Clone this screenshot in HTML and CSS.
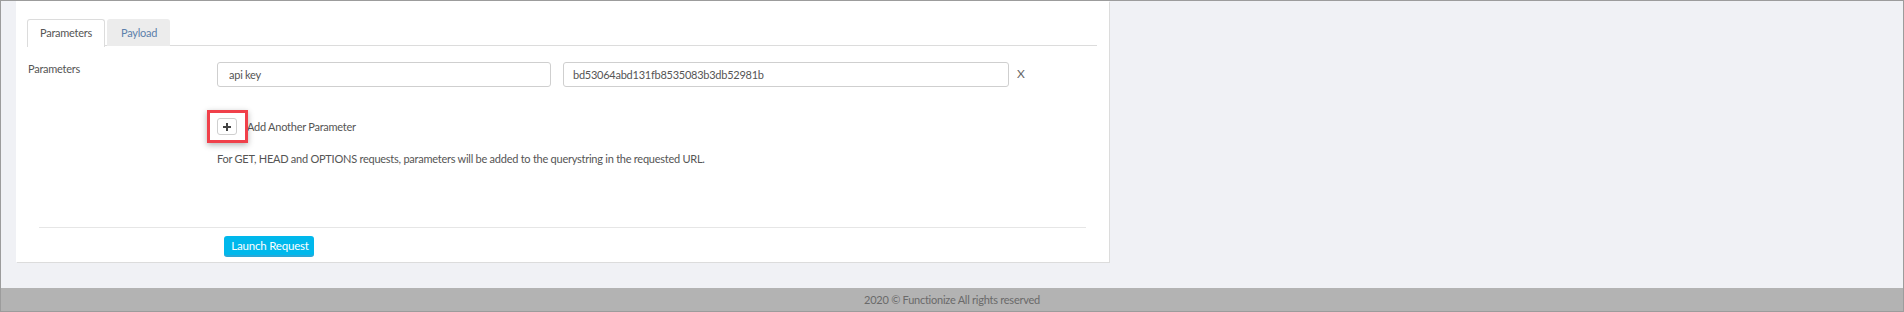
FILE: index.html
```html
<!DOCTYPE html>
<html>
<head>
<meta charset="utf-8">
<link rel="stylesheet" href="styles.css">
</head>
<body>
<div class="page">
  <main class="main">
    <section class="card">
      <ul class="tabs">
        <li class="tab active">Parameters</li>
        <li class="tab">Payload</li>
      </ul>
      <div class="form-row">
        <label class="label">Parameters</label>
        <div class="fields">
          <div class="param-row">
            <input class="input key" type="text" value="api key">
            <input class="input val" type="text" value="bd53064abd131fb8535083b3db52981b">
            <span class="remove">X</span>
          </div>
          <div class="add-row">
            <span class="add-wrap">
              <button class="add-btn" type="button" aria-label="Add">
                <svg width="8" height="8" viewBox="0 0 8 8"><path d="M3 0h2v3h3v2H5v3H3V5H0V3h3z" fill="#444"/></svg>
              </button>
              <span class="highlight"></span>
            </span>
            <span class="add-text">Add Another Parameter</span>
          </div>
          <p class="help">For GET, HEAD and OPTIONS requests, parameters will be added to the querystring in the requested URL.</p>
        </div>
      </div>
      <hr class="divider">
      <div class="actions">
        <button class="launch" type="button">Launch Request</button>
      </div>
    </section>
  </main>
  <footer class="footer">2020 © Functionize All rights reserved</footer>
</div>
</body>
</html>
```
FILE: styles.css
```css
* { box-sizing: border-box; }
html, body { margin: 0; padding: 0; }
body {
  font-family: Lato, "Open Sans", sans-serif;
  font-size: 11px;
  letter-spacing: -0.25px;
  color: #555;
  background: #f0f1f5;
}
.page {
  width: 1904px;
  height: 312px;
  border: 1px solid #9c9c9c;
  display: flex;
  flex-direction: column;
}
.main {
  flex: 1;
  padding-left: 15px;
}
.card {
  width: 1093px;
  height: 261px;
  background: #fff;
  box-shadow: 1px 1px 0 #dcdcdc;
  padding: 18px 12px 0 11px;
  display: flex;
  flex-direction: column;
}
.tabs {
  list-style: none;
  margin: 0;
  padding: 0;
  display: flex;
  gap: 2px;
  border-bottom: 1px solid #dcdcdc;
  height: 27px;
}
.tab {
  height: 27px;
  line-height: 26px;
  padding: 0 12px 0 13px;
  background: #ececec;
  color: #5b80ab;
  border-radius: 3px 3px 0 0;
  border: 1px solid #ececec;
  border-bottom: none;
}
.tab.active {
  background: #fff;
  color: #555;
  border-color: #dcdcdc;
  height: 28px;
  padding: 0 12px 0 12px;
}
.form-row {
  display: flex;
  padding-left: 1px;
  margin-top: 10px;
}
.label {
  width: 189px;
  padding-top: 5px;
  line-height: 16px;
}
.fields {
  display: flex;
  flex-direction: column;
  padding-top: 6px;
}
.param-row {
  display: flex;
  align-items: center;
  gap: 12px;
}
.input {
  height: 25px;
  border: 1px solid #cfcfcf;
  border-radius: 3px;
  padding: 0 9px;
  font-family: Lato, "Open Sans", sans-serif;
  font-size: 11px;
  letter-spacing: -0.25px;
  color: #555;
  background: #fff;
}
.input.key { width: 334px; padding-left: 11px; }
.input.val { width: 446px; }
.remove {
  margin-left: -4px;
  font-size: 12px;
  color: #666;
  margin-top: -3px;
}
.add-row {
  display: flex;
  align-items: center;
  margin-top: 31px;
  height: 17px;
}
.add-wrap {
  position: relative;
  display: inline-flex;
}
.add-btn {
  width: 20px;
  height: 17px;
  border: 1px solid #cfcfcf;
  border-radius: 3px;
  background: #fff;
  padding: 0;
  display: flex;
  align-items: center;
  justify-content: center;
}
.add-btn svg { display: block; }
.highlight {
  position: absolute;
  left: -10px;
  top: -8px;
  width: 41px;
  height: 33px;
  border: 3px solid #f0404a;
  box-shadow: 0 2px 6px rgba(0, 0, 0, 0.3);
}
.add-text {
  margin-left: 10px;
  line-height: 16px;
}
.help {
  margin: 17px 0 0 0;
  line-height: 14px;
}
.divider {
  border: none;
  border-top: 1px solid #e6e6e6;
  margin: 61px 0 0 12px;
  width: 1047px;
  height: 0;
}
.actions {
  padding-left: 197px;
  margin-top: 8px;
}
.launch {
  width: 90px;
  height: 21px;
  background: #00b8ec;
  border: none;
  border-bottom: 2px solid #28a8d8;
  border-radius: 3px;
  color: #fff;
  font-family: Lato, "Open Sans", sans-serif;
  font-size: 11.5px;
  letter-spacing: -0.2px;
  padding: 0 0 0 2px;
  line-height: 19px;
}
.footer {
  height: 23px;
  margin-top: 25px;
  background: #b3b3b3;
  color: #6a6a6a;
  text-align: center;
  line-height: 23px;
  font-size: 11px;
}
```
